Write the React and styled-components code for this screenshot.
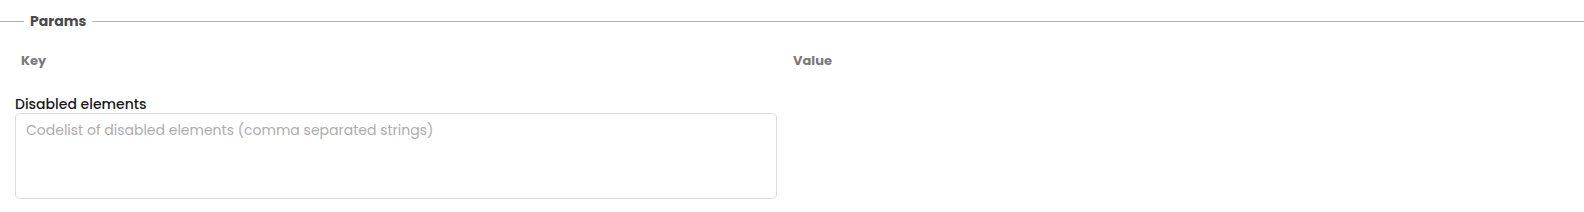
import React from 'react'
import styled, {createGlobalStyle} from 'styled-components'

const Global=createGlobalStyle`
 html,body{margin:0;padding:0;background:#fff;}
 body{font-family:Poppins,"DejaVu Sans",sans-serif;}
 *{box-sizing:border-box;}
`

const Fieldset=styled.fieldset`
 margin:0;
 padding:0 15px 15px 15px;
 border:none;
 border-top:1px solid #b3b3b3;
 margin-top:14px;
 min-width:0;
`

const Legend=styled.legend`
 margin-left:9px;
 padding:0 6px;
 font-size:14px;
 font-weight:700;
 color:#4a4a4a;
 line-height:14px;
`

const Header=styled.div`
 display:grid;
 grid-template-columns:772px 1fr;
 padding:25px 6px 0 6px;
`

const HeadCell=styled.div`
 font-size:13px;
 font-weight:700;
 color:#7a7a7a;
 line-height:16px;
`

const Field=styled.div`
 display:flex;
 flex-direction:column;
 margin-top:27px;
 width:762px;
`

const Label=styled.label`
 font-size:14px;
 font-weight:500;
 color:#1a1a1a;
 line-height:16px;
 margin-bottom:1px;
`

const TextArea=styled.textarea`
 height:86px;
 width:100%;
 border:1px solid #dcdcdc;
 border-radius:4px;
 padding:6px 10px;
 font-family:inherit;
 font-size:14px;
 line-height:20px;
 color:#333;
 resize:none;
 outline:none;
 &::placeholder{color:#adadad;}
`

function App() {
 return (
  <>
   <Global/>
   <Fieldset>
    <Legend>Params</Legend>
    <Header>
     <HeadCell>Key</HeadCell>
     <HeadCell>Value</HeadCell>
    </Header>
    <Field>
     <Label>Disabled elements</Label>
     <TextArea placeholder="Codelist of disabled elements (comma separated strings)"/>
    </Field>
   </Fieldset>
  </>
 )
}

export default App
